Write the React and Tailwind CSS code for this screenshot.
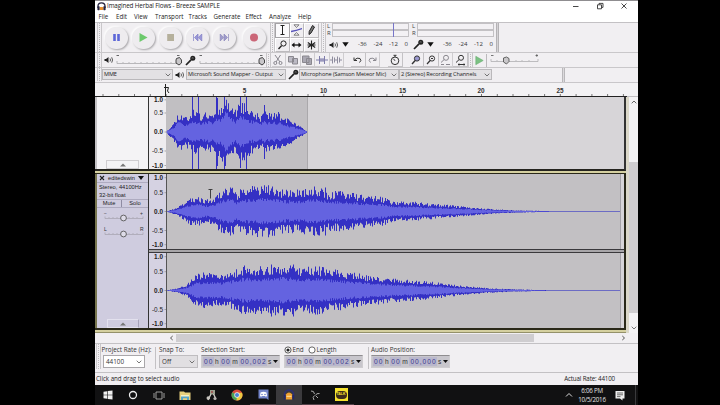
import React from "react";

const SANS = "font-['Open_Sans','Noto_Sans',sans-serif]";

/* ---------- waveforms ---------- */

function makeRandom(seed) {
  let s = seed;
  return () => {
    s = (s * 1664525 + 1013904223) % 4294967296;
    return s / 4294967296;
  };
}

function envelopeAt(points, x) {
  for (let i = 1; i < points.length; i++) {
    if (x <= points[i][0]) {
      const [x0, a] = points[i - 1];
      const [x1, b] = points[i];
      return a + ((b - a) * (x - x0)) / (x1 - x0);
    }
  }
  return 0;
}

/* Each pixel column gets its own peak and RMS height, so the outline is stepped. */
function buildWave({ points, spikes = [], seed, mid, limit }) {
  const rnd = makeRandom(seed);
  const end = points[points.length - 1][0];
  const peakTop = [];
  const peakBottom = [];
  const rmsTop = [];
  const rmsBottom = [];
  for (let x = points[0][0]; x < end; x += 1) {
    const e = envelopeAt(points, x);
    let up = e * (0.66 + 0.46 * rnd());
    let down = e * (0.64 + 0.46 * rnd());
    for (const [sx, h] of spikes) {
      if (Math.abs(sx - x) < 0.6) {
        up = h;
        down = h;
      }
    }
    up = Math.max(0.4, Math.min(limit, up));
    down = Math.max(0.4, Math.min(limit, down));
    const r = e * (0.4 + 0.18 * rnd());
    peakTop.push(`${x},${(mid - up).toFixed(1)} ${x + 1},${(mid - up).toFixed(1)}`);
    peakBottom.unshift(`${x + 1},${(mid + down).toFixed(1)} ${x},${(mid + down).toFixed(1)}`);
    rmsTop.push(`${x},${(mid - r).toFixed(1)} ${x + 1},${(mid - r).toFixed(1)}`);
    rmsBottom.unshift(`${x + 1},${(mid + r * 0.95).toFixed(1)} ${x},${(mid + r * 0.95).toFixed(1)}`);
  }
  return {
    peak: [...peakTop, ...peakBottom].join(" "),
    rms: [...rmsTop, ...rmsBottom].join(" "),
  };
}

const clipA = buildWave({
  seed: 11, mid: 35, limit: 37,
  points: [[1, 2], [3, 4], [7, 8], [12, 18], [18, 15], [22, 15], [26, 20], [31, 20], [34, 15], [40, 20], [47, 18], [50, 25], [55, 24], [59, 36], [64, 29], [68, 20], [74, 28], [79, 26], [84, 21], [88, 19], [94, 15], [98, 19], [103, 18], [112, 18], [120, 13], [128, 9], [134, 5], [139, 2], [141, 0]],
  spikes: [[26, 37], [32, 37], [50, 37], [51, 34], [58, 37], [74, 36], [80, 37], [98, 27]],
});

const channelL = buildWave({
  seed: 27, mid: 37.5, limit: 30,
  points: [[1, 0.8], [8, 3], [16, 8], [22, 12], [32, 14], [38, 11], [46, 12], [50, 18], [58, 22], [66, 22], [69, 16], [73, 20], [84, 23], [100, 24], [116, 20], [132, 20], [150, 23], [160, 18], [176, 19], [194, 15], [212, 14], [228, 9], [245, 9], [262, 7.5], [280, 6], [300, 4.5], [314, 3], [330, 2], [345, 1.2], [365, 0.8], [382, 0.3]],
  spikes: [[63, 24], [115, 22], [158, 24]],
});

const channelR = buildWave({
  seed: 43, mid: 37.5, limit: 30,
  points: [[1, 0.6], [10, 2], [20, 6], [28, 14], [38, 17], [46, 15], [54, 14], [62, 17], [72, 20], [76, 23], [88, 22], [104, 22], [116, 24], [130, 21], [150, 22], [166, 19], [180, 17], [200, 14], [216, 12], [236, 10], [255, 9], [270, 7.5], [290, 5], [305, 3.5], [320, 2.3], [340, 1.3], [360, 0.8], [379, 0.3]],
  spikes: [[104, 26], [126, 26], [148, 24]],
});

function Wave({ data, mid, end, height }) {
  return (
    <svg width="460" height={height} className="block shrink-0">
      <line x1="0" x2={end} y1={mid} y2={mid} stroke="#6c6cc4" strokeWidth="1" />
      <polygon points={data.peak} fill="#3430c4" />
      <polygon points={data.rms} fill="#6463e0" />
    </svg>
  );
}

/* ---------- small controls ---------- */

function Grip() {
  return (
    <div className="h-full w-[5px] shrink-0 border-x border-[#c9c7ca] bg-[repeating-linear-gradient(0deg,#bdbbbe_0_1px,#f0eef1_1px_2px)] bg-clip-content px-px" />
  );
}

function RoundButton({ children }) {
  return (
    <div className="flex h-[22px] w-[23px] shrink-0 items-center justify-center rounded-full bg-[#eeecef] shadow-[1px_1px_2px_#a9a7aa,-1px_-1px_2px_#ffffff]">
      <svg width="11" height="11" viewBox="0 0 11 11">{children}</svg>
    </div>
  );
}

function Tool({ active, children }) {
  return (
    <div className={active ? "flex items-center justify-center border border-[#a5a3a6] bg-[#fbfafc]" : "flex items-center justify-center border border-t-white border-l-white border-r-[#bcbabd] border-b-[#bcbabd] bg-[#f0eef1]"}>
      <svg width="11" height="12" viewBox="0 0 11 12" fill="none" stroke="#222" strokeWidth="1">{children}</svg>
    </div>
  );
}

function Speaker() {
  return (
    <svg width="10" height="8" viewBox="0 0 10 8" className="shrink-0">
      <path d="M.5 3H2L4.500 1V7L2 5H.5Z" fill="#222" />
      <path d="M6 2.500Q7 4 6 5.500M7.700 1.300Q9.400 4 7.700 6.700" fill="none" stroke="#333" strokeWidth=".8" />
    </svg>
  );
}

function Mic() {
  return (
    <svg width="11" height="11" viewBox="0 0 11 11" className="shrink-0">
      <circle cx="7.800" cy="3.200" r="2.500" fill="#222" />
      <path d="M7 2.200L8.600 4M8.500 1.800L6.800 3.800" stroke="#888" strokeWidth=".5" />
      <path d="M6 4.800L1 10" stroke="#222" strokeWidth="1.700" />
    </svg>
  );
}

function Caret({ className }) {
  return (
    <svg width="6" height="4" viewBox="0 0 6 4" className={className}>
      <path d="M.7.7L3 3L5.300.7" fill="none" stroke="#555" strokeWidth=".8" />
    </svg>
  );
}

function DropArrow() {
  return (
    <svg width="7" height="5" viewBox="0 0 7 5" className="shrink-0"><path d="M.3.3H6.700L3.500 4.700Z" fill="#111" /></svg>
  );
}

function VolumeSlider() {
  return (
    <svg width="68" height="14" viewBox="0 0 68 14" className="shrink-0">
      <path d="M.5 2.500H3M61 2.500H63.500" stroke="#444" strokeWidth=".8" />
      <path d="M1 8V10.500H61V8M7 9V10M13 9V10M19 9V10M25 9V10M31 9V10M37 9V10M43 9V10M49 9V10M55 9V10" fill="none" stroke="#aaa8ab" strokeWidth=".8" />
      <path d="M60.500 5.500L63.500 4.500L65.500 7V10L63 12L60 10V7Z" fill="#c9c7ca" stroke="#333" strokeWidth=".9" />
    </svg>
  );
}

function MeterBlock({ icon, mark }) {
  return (
    <div className="flex h-[29px] w-[85px] shrink-0 flex-col">
      <div className="relative flex h-[14px] shrink-0 flex-col">
        {["L", "R"].map((side) => (
          <div key={side} className="flex h-[7px] items-center">
            <span className="w-[5px] text-[6px] leading-[7px] text-[#444]">{side}</span>
            <div className="h-[7px] w-[77px] border border-[#c3c1c4] bg-[#f3f1f4]" />
          </div>
        ))}
        {mark && <div className="absolute top-0 left-[66px] h-[14px] w-px bg-[#7775c8]" />}
      </div>
      <div className="flex h-[15px] items-center">
        {icon}
        <span className="ml-[3px] flex"><DropArrow /></span>
        <div className="flex flex-1 justify-between pr-[4px] pl-[9px] text-[6px] text-[#333]">
          <span>-36</span><span>-24</span><span>-12</span><span>0</span>
        </div>
      </div>
    </div>
  );
}

function EditButton({ children, dim }) {
  return (
    <div className={dim ? "flex h-[14px] w-[14.500px] shrink-0 items-center justify-center border-r border-b border-[#cfcdd0] text-[#8a888f]" : "flex h-[14px] w-[14.500px] shrink-0 items-center justify-center border-r border-b border-[#c4c2c5] text-[#333]"}>
      <svg width="12" height="12" viewBox="0 0 12 12" fill="none" stroke="currentColor" strokeWidth="1">{children}</svg>
    </div>
  );
}

/* ---------- window chrome ---------- */

function TitleBar() {
  return (
    <div className="flex h-[11px] shrink-0 items-center border-t border-[#8f8d90] bg-white">
      <svg width="9" height="9" viewBox="0 0 9 9" className="ml-[2px] shrink-0">
        <path d="M1 6V4A3.500 3.200 0 0 1 8 4V6" fill="none" stroke="#25233f" strokeWidth="1.300" />
        <rect x=".4" y="4.300" width="2.300" height="4" rx=".7" fill="#25233f" />
        <rect x="6.300" y="4.300" width="2.300" height="4" rx=".7" fill="#25233f" />
        <path d="M2.800 5H6.200V8H2.800Z" fill="#e89030" />
      </svg>
      <span className="ml-[1px] w-[200px] text-[6.300px] tracking-[-0.13px] text-[#222]">Imagined Herbal Flows - Breeze SAMPLE</span>
      <svg width="58" height="8" viewBox="0 0 58 8" className="mr-[9px] ml-auto" fill="none" stroke="#333" strokeWidth=".9">
        <path d="M2 4.500H7.500M50.500 1.500L55.500 6.500M55.500 1.500L50.500 6.500" />
        <path d="M26.500 2.800H30.500V6.800H26.500ZM28 2.500V1.400H32V5.400H30.800" />
      </svg>
    </div>
  );
}

function MenuBar() {
  return (
    <div className="flex h-[11px] shrink-0 items-center bg-white pl-[3.500px] text-[6.200px] text-[#222]">
      <span className="w-[17.500px]">File</span>
      <span className="w-[18px]">Edit</span>
      <span className="w-[21px]">View</span>
      <span className="w-[33.500px]">Transport</span>
      <span className="w-[25px]">Tracks</span>
      <span className="w-[32px]">Generate</span>
      <span className="w-[23.500px]">Effect</span>
      <span className="w-[29px]">Analyze</span>
      <span>Help</span>
    </div>
  );
}

function TransportRow() {
  return (
    <div className="flex h-[30px] shrink-0 border-t border-[#c3c1c4]">
      <div className="ml-[2px] flex"><Grip /></div>
      <div className="flex w-[168px] shrink-0 items-center gap-[4px] pl-[3px]">
        <RoundButton><path d="M2.200 2H4.800V9H2.200ZM6.200 2H8.800V9H6.200Z" fill="#5c66d8" /></RoundButton>
        <RoundButton><path d="M1.500 1L9.500 5.500L1.500 10Z" fill="#6cc96c" /></RoundButton>
        <RoundButton><path d="M2.200 2H9V9H2.200Z" fill="#b5b09c" /></RoundButton>
        <RoundButton><path d="M1.500 2V9M6 2L2.500 5.500L6 9ZM9.800 2L6.300 5.500L9.800 9Z" fill="#9a98d8" stroke="#8280c6" strokeWidth=".7" /></RoundButton>
        <RoundButton><path d="M9.500 2V9M5 2L8.500 5.500L5 9ZM1.200 2L4.700 5.500L1.200 9Z" fill="#a09ccb" stroke="#8e8abb" strokeWidth=".7" /></RoundButton>
        <div className="ml-[3px]"><RoundButton><circle cx="5" cy="5.500" r="4" fill="#cb6678" /></RoundButton></div>
      </div>
      <Grip />
      <div className="grid w-[44px] shrink-0 grid-cols-3 grid-rows-2">
        <Tool active><path d="M3.500 1.500H7.500M3.500 10.500H7.500M5.500 1.500V10.500" /></Tool>
        <Tool>
          <path d="M0 7.500Q5 6.500 11 4.500" stroke="#5652b8" strokeWidth="1.300" />
          <path d="M3 .8H8L5.500 3.500ZM3 11.200H8L5.500 8.500Z" strokeWidth=".7" stroke="#555" />
        </Tool>
        <Tool><path d="M6.500 1.500L8.500 3L5 9L3 10.500L3.200 7.500Z" fill="#777" /></Tool>
        <Tool><circle cx="6.500" cy="4.500" r="2.600" /><path d="M4.500 6.800L1.500 10" strokeWidth="1.400" /></Tool>
        <Tool><path d="M2 6H9" strokeWidth="1.400" /><path d="M.5 6L3.500 3.500V8.500ZM10.500 6L7.500 3.500V8.500Z" fill="#111" stroke="none" /></Tool>
        <Tool><path d="M5.500 1.500V10.500M1.800 3.500L9.200 8.500M9.200 3.500L1.800 8.500M1.500 6H9.500" strokeWidth="1.100" /></Tool>
      </div>
      <div className="ml-[2px] flex"><Grip /></div>
      <div className="ml-[1px] flex"><MeterBlock mark icon={<span className="ml-[2px] flex"><Speaker /></span>} /></div>
      <MeterBlock icon={<span className="ml-[1px] flex"><Mic /></span>} />
      <div className="-ml-px h-full w-[3px] border-x border-[#b4b2b5] bg-[#d4d2d5]" />
    </div>
  );
}

function MixerRow() {
  return (
    <div className="flex h-[15px] shrink-0 items-center border-t border-[#c9c7ca]">
      <div className="ml-[2px] flex h-full"><Grip /></div>
      <div className="ml-[2px] flex"><Speaker /></div>
      <div className="ml-[2px] flex w-[69px]"><VolumeSlider /></div>
      <Mic />
      <div className="ml-[3px] flex w-[67px]"><VolumeSlider /></div>
      <Grip />
      <div className="ml-[0.500px] flex">
        <EditButton dim><path d="M3 1L8 8M8.500 1L4 8" /><circle cx="3.300" cy="9" r="1.500" /><circle cx="8.500" cy="9" r="1.500" /></EditButton>
        <EditButton dim><path d="M1.500 2.500H6.500V8H1.500ZM5.500 4.500H10.500V10H5.500Z" fill="#bcbac4" /></EditButton>
        <EditButton dim><path d="M1.500 2H8V8.500H1.500ZM5.500 4.500H10.500V10.500H5.500Z" fill="#aaa8b2" /></EditButton>
        <EditButton dim><path d="M0 6H12M3.500 2V10M8.500 2V10M5 4V8M7 4V8" stroke="#7f7dab" /></EditButton>
        <EditButton dim><path d="M0 6H2M5 6H7M10 6H12M2.500 2.500V9.500M4.500 3.500V8.500M7.500 2.500V9.500M9.500 3.500V8.500" stroke="#8f8d9f" /></EditButton>
      </div>
      <div className="ml-[7px] flex">
        <EditButton><path d="M2 3.500V6.500H5M2.300 6.200Q5 3 8 4.500Q10 6.500 7.500 8.500" /></EditButton>
        <EditButton dim><path d="M10 3.500V6.500H7M9.700 6.200Q7 3 4 4.500Q2 6.500 4.500 8.500" /></EditButton>
      </div>
      <div className="ml-[8px] flex">
        <EditButton><circle cx="6" cy="6.800" r="3.800" /><path d="M4.500 1.300H7.500M6 1.300V3M6 6.800L4.500 4.800" /></EditButton>
      </div>
      <div className="ml-[7px] flex">
        <EditButton><circle cx="7" cy="4.500" r="2.600" fill="#9997cf" /><path d="M5.200 6.500L2 10" strokeWidth="1.400" /></EditButton>
        <EditButton><circle cx="7" cy="4.500" r="2.600" /><path d="M5.200 6.500L2 10M6 4.500H8" strokeWidth="1.200" /></EditButton>
        <EditButton dim><circle cx="7" cy="3.800" r="2.500" /><path d="M5.200 5.500L2 8.500M2 10.500H5M7 10.500H11" /></EditButton>
        <EditButton><circle cx="7" cy="3.800" r="2.500" /><path d="M5.200 5.500L2 8.500M4 10.500H11M5 9.500V11.500M10 9.500V11.500" /></EditButton>
      </div>
      <div className="flex h-full"><Grip /></div>
      <svg width="14" height="13" viewBox="0 0 14 13" className="shrink-0 border-r border-[#bbb9bc]"><path d="M3 2L11 6.500L3 11Z" fill="#7cc184" stroke="#65ab6e" strokeWidth=".6" /></svg>
      <svg width="52" height="14" viewBox="0 0 52 14" className="ml-[2px] shrink-0">
        <path d="M2 2.500H4.500M46.500 2.500H49M47.800 1.200V3.800" stroke="#555" strokeWidth=".8" />
        <path d="M2 6V8.500H49V6M8 7V8M27 7V8M33 7V8M40 7V8" fill="none" stroke="#b0aeb1" strokeWidth=".8" />
        <path d="M14.500 5L17.500 4L20 5.500V8.500L17.500 11L14.500 9Z" fill="#c9c7ca" stroke="#555" strokeWidth=".9" />
      </svg>
    </div>
  );
}

function DeviceRow() {
  const box = "flex h-[11px] shrink-0 items-center justify-between border border-[#bab8bb] bg-[#e3e1e4] pr-[1px] pl-[1px]";
  return (
    <div className="flex h-[16px] shrink-0 items-center border-y border-[#c9c7ca] pb-px text-[5.600px] tracking-[-0.1px] text-[#222]">
      <div className="ml-[2px] flex h-full"><Grip /></div>
      <div className={box + " w-[71px]"}>MME<Caret /></div>
      <div className="mr-px ml-[2px] flex"><Speaker /></div>
      <div className={box + " w-[100px]"}><span className="whitespace-nowrap">Microsoft Sound Mapper - Output</span><Caret /></div>
      <div className="ml-[2px] flex"><Mic /></div>
      <div className={box + " w-[100px]"}><span className="whitespace-nowrap">Microphone (Samson Meteor Mic)</span><Caret /></div>
      <div className={box + " w-[93px]"}><span className="whitespace-nowrap">2 (Stereo) Recording Channels</span><Caret /></div>
      <div className="-mb-px ml-[70px] h-[14px] w-[3px] border-x border-[#b9b7ba] bg-[#dcdadd]" />
    </div>
  );
}

function TimeRuler() {
  const ticks = Array.from({ length: 34 }, (_, i) => i);
  const labels = [["5", 149.5], ["10", 228.5], ["15", 307.5], ["20", 386], ["25", 465]];
  return (
    <svg width="543" height="14" className="block shrink-0 bg-[#f3f2f4]" fontFamily="Liberation Sans, sans-serif">
      {ticks.map((i) => (
        <path key={i} d={`M${(8 + i * 15.77).toFixed(1)} 11V13`} stroke="#555" strokeWidth=".8" />
      ))}
      {labels.map(([t, x]) => (
        <text key={t} x={x} y="10" textAnchor="middle" fontSize="6.400" fontWeight="bold" fill="#333">{t}</text>
      ))}
      <path d="M70.500 1V13M69 4.500H73.500L72.500 8L74 10" fill="none" stroke="#222" strokeWidth="1" />
      <path d="M0 13.500H532" stroke="#222" />
      <path d="M532 13.500H543" stroke="#c0bec1" />
    </svg>
  );
}

/* ---------- tracks ---------- */

function Scale({ height, marks, className }) {
  return (
    <svg width="18" height={height} className={className} fontFamily="Liberation Sans, sans-serif">
      {marks.map(([label, y, bold]) => (
        <g key={label}>
          <text x="14" y={y + 2.3} textAnchor="end" fontSize="6.400" fontWeight={bold ? "bold" : "normal"} fill="#222">{label}</text>
          <path d={`M15.500 ${y}H18`} stroke="#888" strokeWidth=".7" />
        </g>
      ))}
    </svg>
  );
}

function CollapseButton({ className }) {
  return (
    <div className={className}>
      <svg width="8" height="4" viewBox="0 0 8 4"><path d="M1 3.500L4 .5L7 3.500Z" fill="#777" /></svg>
    </div>
  );
}

function PanSlider({ left, right }) {
  return (
    <svg width="42" height="14" viewBox="0 0 42 14" className="block" fontFamily="Liberation Sans, sans-serif">
      <text x="1" y="4.500" fontSize="5" fill="#333">{left}</text>
      <text x="37" y="4.500" fontSize="5" fill="#333">{right}</text>
      <path d="M2 6.500V8.500H40V6.500M6 7V8M10 7V8M14 7V8M26 7V8M30 7V8M34 7V8" fill="none" stroke="#a3a1ad" strokeWidth=".7" />
      <circle cx="20.500" cy="8" r="2.900" fill="#dedce8" stroke="#555" strokeWidth=".9" />
    </svg>
  );
}

function TopTrack() {
  return (
    <div className="flex h-[74px] shrink-0 border-r-2 border-b-2 border-r-[#333] border-b-[#25241f] bg-[#d7d5d8]">
      <div className="flex w-[54px] shrink-0 items-end justify-center border-r border-l-2 border-r-[#333] border-l-[#c4c2c5] bg-[#f4f3f5]">
        <CollapseButton className="flex h-[9px] w-[33px] items-center justify-center border border-[#cfcdd0]" />
      </div>
      <Scale
        height={72}
        className="-mr-px block shrink-0 overflow-visible bg-[#eeecef]"
        marks={[["1.0", 2.8, true], ["0.5", 16, false], ["0.0", 35, true], ["-0.5", 54, false], ["-1.0", 68.5, true]]}
      />
      <div className="h-full w-[142px] shrink-0 overflow-hidden border-r border-[#aaa8ab] bg-[#c1bfc2]">
        <Wave data={clipA} mid={35} end={141} height={72} />
      </div>
    </div>
  );
}

const stereoMarks = [["1.0", 3.7, true], ["0.5", 18.7, false], ["0.0", 37.5, true], ["-0.5", 56.5, false], ["-1.0", 70.7, true]];

function Channel({ data, className }) {
  return (
    <div className={className}>
      <Scale height={75} className="-mr-px block shrink-0" marks={stereoMarks} />
      <div className="flex flex-1 border-l border-[#555] bg-[#c2c0c3]">
        <div className="w-[454px] shrink-0 overflow-hidden border-r border-[#a5a3a6]">
          <Wave data={data} mid={37.5} end={454} height={75} />
        </div>
        <div className="flex-1 bg-[#d7d5d8]" />
      </div>
    </div>
  );
}

function StereoTrack() {
  return (
    <div className="flex h-[157px] shrink-0 border-t border-r-2 border-b-2 border-[#2a2919]">
      <div className="flex w-[54px] shrink-0 flex-col border-r border-l-2 border-r-[#333] border-l-[#77754e] bg-[#cfccdf] font-['Liberation_Sans',sans-serif] text-[5.700px] text-[#222]">
        <div className="flex h-[8px] items-center justify-between pr-[4px] pl-[2px]">
          <svg width="6" height="6" viewBox="0 0 6 6"><path d="M1 1L5 5M5 1L1 5" stroke="#222" strokeWidth="1.100" /></svg>
          <span>editedswin</span>
          <svg width="6" height="4" viewBox="0 0 6 4"><path d="M0 0H6L3 4Z" fill="#111" /></svg>
        </div>
        <div className="h-[9px] border-t border-[#aeabc0] pl-[2px] leading-[9px] whitespace-nowrap">Stereo, 44100Hz</div>
        <div className="h-[8px] pl-[2px] leading-[9px]">32-bit float</div>
        <div className="flex h-[9px] border-y border-[#aeabc0] text-center leading-[7px]">
          <span className="w-[25px] border-r border-[#8f8ca3]">Mute</span>
          <span className="flex-1">Solo</span>
        </div>
        <div className="mt-[2px] ml-[6px]"><PanSlider left="−" right="+" /></div>
        <div className="mt-[2px] ml-[6px]"><PanSlider left="L" right="R" /></div>
        <CollapseButton className="mt-auto ml-[10px] flex h-[9px] w-[32px] items-center justify-center border border-[#e3e1ee] border-r-[#a6a3b8]" />
      </div>
      <div className="flex flex-1 flex-col bg-[#d5d2e2]">
        <Channel data={channelL} className="flex h-[75px] shrink-0" />
        <div className="h-[4px] shrink-0 border-y border-[#3a393c] bg-[#a8a6a9]" />
        <Channel data={channelR} className="flex h-[75px] shrink-0" />
      </div>
    </div>
  );
}

function Tracks() {
  return (
    <div className="flex h-[236px] shrink-0">
      <div className="flex w-[531px] shrink-0 flex-col">
        <TopTrack />
        <div className="h-[2px] shrink-0 bg-[#d5d0a0]" />
        <div className="relative flex flex-col">
          <StereoTrack />
          <svg width="5" height="10" viewBox="0 0 5 10" className="absolute top-[16px] left-[113px]">
            <path d="M.5.5H4.500M2.500.5V9.500" stroke="#333" strokeWidth=".9" />
          </svg>
        </div>
        <div className="h-[3px] shrink-0 border-b border-[#94916a] bg-[#d5d0a0]" />
      </div>
      <div className="w-[3px] shrink-0 bg-[#dbd8c9]" />
      <div className="flex w-[9px] shrink-0 flex-col items-center bg-[#f3f2f4]">
        <svg width="6" height="4" viewBox="0 0 6 4" className="mt-[3px]"><path d="M.7 3.300L3 1L5.300 3.300" fill="none" stroke="#555" strokeWidth=".9" /></svg>
        <div className="mt-[58px] h-[151px] w-full bg-[#cfcdd0]" />
        <Caret className="mt-[13px]" />
      </div>
    </div>
  );
}

/* ---------- bottom bars ---------- */

function TimeField({ digits }) {
  const [h, m, s] = digits;
  const cell = "bg-[#b9b7cc] pl-px text-[#3a378f]";
  return (
    <div className="flex h-[13px] w-[79px] shrink-0 items-center justify-between border border-[#cfcdd0] border-t-[#8f8d90] bg-[#c8c6cc] px-[1px] font-['Liberation_Sans',sans-serif] text-[6.600px] leading-[9px] text-[#333]">
      <span className={cell + " tracking-[1.1px]"}>{h}</span>
      <span>h</span>
      <span className={cell + " tracking-[1.1px]"}>{m}</span>
      <span>m</span>
      <span className={cell + " tracking-[1px]"}>{s}</span>
      <span>s</span>
      <svg width="5" height="3" viewBox="0 0 5 3"><path d="M0 0H5L2.500 3Z" fill="#111" /></svg>
    </div>
  );
}

function HorizontalScroll() {
  return (
    <div className="flex h-[10px] shrink-0 items-center bg-[#f1eff2] pl-[74px]">
      <svg width="5" height="6" viewBox="0 0 5 6"><path d="M3.700 1L1.500 3L3.700 5" fill="none" stroke="#444" strokeWidth=".9" /></svg>
      <div className="ml-[2px] h-[8px] w-[358px] bg-[#cfcdd0]" />
      <svg width="5" height="6" viewBox="0 0 5 6" className="ml-[87px]"><path d="M1.300 1L3.500 3L1.300 5" fill="none" stroke="#444" strokeWidth=".9" /></svg>
    </div>
  );
}

function SelectionBar() {
  return (
    <div className="flex h-[29px] shrink-0 border-t border-[#c3c1c4] text-[6.300px] whitespace-nowrap text-[#333]">
      <div className="ml-[1px] flex pb-[3px]"><Grip /></div>
      <div className="w-[54px] shrink-0">
        <div className="h-[11px] pl-[0.500px] leading-[12px]">Project Rate (Hz):</div>
        <div className="ml-[2px] flex h-[13px] w-[42px] items-center justify-between border border-[#a9a7aa] bg-white px-[2px]">44100<Caret /></div>
      </div>
      <div className="my-[3px] w-px shrink-0 bg-[#c3c1c4]" />
      <div className="w-[45px] shrink-0 pl-[3px]">
        <div className="h-[11px] leading-[12px]">Snap To:</div>
        <div className="flex h-[13px] w-[39px] items-center justify-between border border-[#bfbdc0] bg-[#e1dfe2] px-[2px]">Off<Caret /></div>
      </div>
      <div className="w-[83px] shrink-0">
        <div className="h-[11px] leading-[12px]">Selection Start:</div>
        <TimeField digits={["00", "00", "00,002"]} />
      </div>
      <div className="w-[84px] shrink-0">
        <div className="flex h-[11px] items-center pt-px">
          <svg width="8" height="8" viewBox="0 0 8 8" className="-ml-[0.500px]"><circle cx="4" cy="4" r="3.100" fill="#fff" stroke="#333" strokeWidth=".8" /><circle cx="4" cy="4" r="1.600" fill="#222" /></svg>
          <span className="ml-[1px] w-[15px]">End</span>
          <svg width="8" height="8" viewBox="0 0 8 8"><circle cx="4" cy="4" r="3.100" fill="#fff" stroke="#444" strokeWidth=".8" /></svg>
          <span className="ml-[1px]">Length</span>
        </div>
        <TimeField digits={["00", "00", "00,002"]} />
      </div>
      <div className="my-[3px] w-px shrink-0 bg-[#c3c1c4]" />
      <div className="w-[83px] shrink-0 pl-[2px]">
        <div className="h-[11px] leading-[12px]">Audio Position:</div>
        <TimeField digits={["00", "00", "00,000"]} />
      </div>
    </div>
  );
}

function StatusBar() {
  return (
    <div className="flex h-[13px] shrink-0 items-center border-t border-[#c3c1c4] text-[6.200px] text-[#222]">
      <span className="ml-[1px] tracking-[-0.03px]">Click and drag to select audio</span>
      <span className="mr-[23px] ml-auto tracking-[-0.14px]">Actual Rate: 44100</span>
    </div>
  );
}

function Taskbar() {
  const slot = "flex h-full w-[26px] shrink-0 items-center justify-center";
  return (
    <div className="flex h-[20px] shrink-0 items-center bg-[#111112]">
      <div className="flex h-full w-[25px] shrink-0 items-center justify-center">
        <svg width="10" height="10" viewBox="0 0 10 10"><path d="M.5 1.800L4.200 1.200V4.700H.5ZM4.800 1.100L9.500.4V4.700H4.800ZM.5 5.300H4.200V8.800L.5 8.200ZM4.800 5.300H9.500V9.600L4.800 8.900Z" fill="#f0f0f0" /></svg>
      </div>
      <div className={slot}>
        <svg width="10" height="10" viewBox="0 0 10 10"><circle cx="5" cy="5" r="3.500" fill="none" stroke="#eee" strokeWidth="1.300" /></svg>
      </div>
      <div className={slot}>
        <svg width="12" height="9" viewBox="0 0 12 9" fill="none" stroke="#aaa" strokeWidth=".9"><path d="M3 1H9V8H3ZM1 2V7M11 2V7" /></svg>
      </div>
      <div className={slot}>
        <svg width="12" height="11" viewBox="0 0 12 11"><path d="M.5 1.500H5L6 2.500H11.500V10H.5Z" fill="#e8cf7c" /><path d="M2 5H10V8H2Z" fill="#f7efc9" /><path d="M2 6.500H10V10H8V8.300H4V10H2Z" fill="#58a5c9" /></svg>
      </div>
      <div className={slot}>
        <svg width="11" height="12" viewBox="0 0 11 12"><path d="M4 1H9V5.500H4Z" fill="#9ca08e" /><path d="M5 5L2 11M7.500 5L9.500 9" stroke="#d0cec8" strokeWidth="1.300" /><circle cx="2.300" cy="9" r="1.800" fill="#c9c6c0" /><circle cx="9" cy="9.500" r="1.600" fill="#b8b4b0" /><circle cx="6" cy="3" r="1" fill="#a04848" /></svg>
      </div>
      <div className={slot}>
        <svg width="12" height="12" viewBox="0 0 12 12">
          <circle cx="6" cy="6" r="5.500" fill="#d94b3c" />
          <path d="M6 6L1.200 3.300A5.500 5.500 0 0 0 5.500 11.500L8 7Z" fill="#4aa457" />
          <path d="M6 6L5.500 11.500A5.500 5.500 0 0 0 11 3.700H6Z" fill="#edc842" />
          <circle cx="6" cy="6" r="2.700" fill="#eee" /><circle cx="6" cy="6" r="2" fill="#4b83d5" />
        </svg>
      </div>
      <div className={slot + " border-b border-[#55424a]"}>
        <svg width="11" height="12" viewBox="0 0 11 12"><path d="M.5.5H10.500V11L8.500 9.500H.5Z" fill="#7384c9" /><path d="M2.500 3.500Q5.500 2 8.500 3.500L9 7Q7.500 8 7 7H4Q3.500 8 2 7Z" fill="#fff" /><circle cx="4" cy="5.500" r=".8" fill="#7384c9" /><circle cx="7" cy="5.500" r=".8" fill="#7384c9" /></svg>
      </div>
      <div className={slot + " bg-[#3b3a3d]"}>
        <svg width="12" height="12" viewBox="0 0 12 12"><path d="M1.500 8V5.500A4.500 4.500 0 0 1 10.500 5.500V8" fill="none" stroke="#2b2f7a" strokeWidth="1.500" /><path d="M2.700 5.500Q6 1.500 9.300 5.500V10.500H2.700Z" fill="#f0a030" /><path d="M3.500 7.300H8.500" stroke="#ffe3a0" strokeWidth="1" /><path d="M.8 6H2.700V10.500H.8ZM9.300 6H11.200V10.500H9.300Z" fill="#25286b" /></svg>
      </div>
      <div className={slot + " border-b border-[#55424a]"}>
        <svg width="12" height="12" viewBox="0 0 12 12" fill="none" stroke="#aaa" strokeWidth="1"><path d="M2 2Q5 1.500 5.500 5M10.500 4.500Q7 4 6.500 6.500M5 11Q3 8 5.500 6.500M9 9L7 7" /></svg>
      </div>
      <div className={slot + " border-b border-[#55424a]"}>
        <div className="flex h-[13px] w-[13px] items-center justify-center bg-[#f5e12e]">
          <div className="flex h-[8px] w-[11px] items-center justify-center rounded-full bg-[#3d2a1c] font-['Liberation_Sans',sans-serif] text-[3.500px] leading-none font-bold text-[#f5e12e]">TALK</div>
        </div>
      </div>
      <svg width="8" height="6" viewBox="0 0 8 6" className="ml-auto"><path d="M1 4.500L4 1.500L7 4.500" fill="none" stroke="#ddd" strokeWidth="1" /></svg>
      <div className="ml-[3px] flex w-[32px] flex-col items-center pb-px text-[6.200px] leading-[9px] tracking-[-0.2px] text-[#e5e5e5]">
        <span>6:06 PM</span>
        <span>10/5/2016</span>
      </div>
      <svg width="10" height="11" viewBox="0 0 10 11" className="mr-[10px] ml-[7px]"><path d="M.5 1H9.500V8.500H7.500V10.500L5 8.500H.5Z" fill="#eee" /><path d="M2 3H8M2 4.800H8M2 6.600H5.500" stroke="#333" strokeWidth=".7" /></svg>
      <div className="mr-[2px] h-full w-px bg-[#3a3a3c]" />
    </div>
  );
}

export default function App() {
  return (
    <div className={"flex h-[405px] w-[720px] overflow-hidden bg-black pl-[95px] " + SANS}>
      <div className="flex w-[543px] shrink-0 flex-col bg-[#f1eff2]">
        <TitleBar />
        <MenuBar />
        <TransportRow />
        <MixerRow />
        <DeviceRow />
        <TimeRuler />
        <Tracks />
        <HorizontalScroll />
        <SelectionBar />
        <StatusBar />
        <Taskbar />
      </div>
    </div>
  );
}
